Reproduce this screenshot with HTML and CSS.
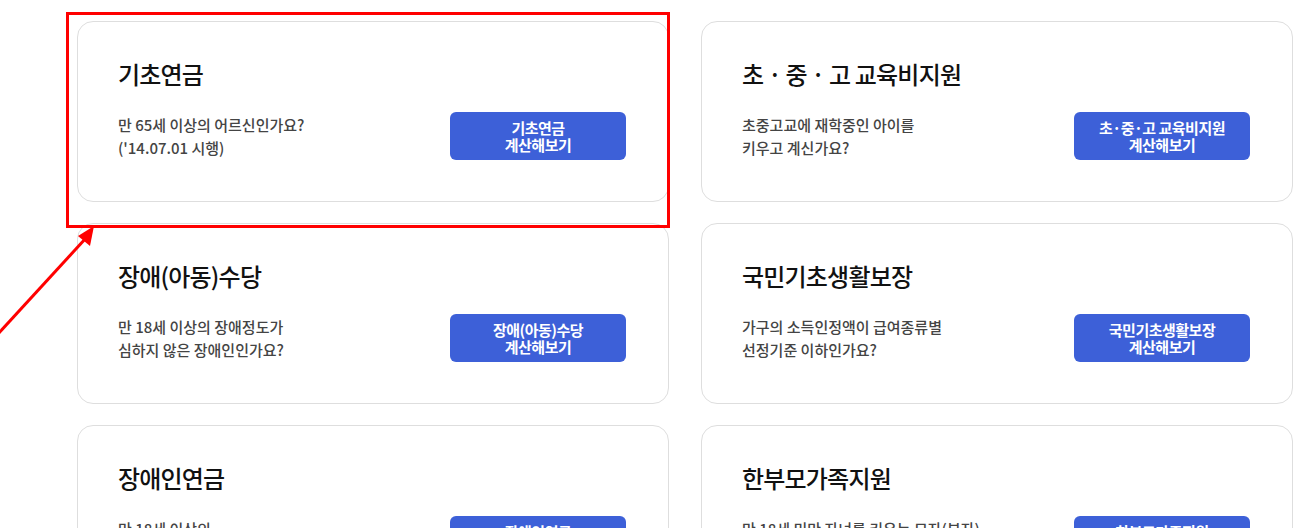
FILE: index.html
```html
<html>
    <head>
        <title>계산해보기</title>
        <link rel="stylesheet" href="styles.css">
    </head>
    <body>
        <div class="grid">
            <div class="card">
                <h3 class="title">기초연금</h3>
                <div class="row">
                    <p class="desc">만 65세 이상의 어르신인가요?<br>('14.07.01 시행)</p>
                    <a class="btn">기초연금<br>계산해보기</a>
                </div>
            </div>
            <div class="card">
                <h3 class="title">초 · 중 · 고 교육비지원</h3>
                <div class="row">
                    <p class="desc">초중고교에 재학중인 아이를<br>키우고 계신가요?</p>
                    <a class="btn">초·중·고 교육비지원<br>계산해보기</a>
                </div>
            </div>
            <div class="card">
                <h3 class="title">장애(아동)수당</h3>
                <div class="row">
                    <p class="desc">만 18세 이상의 장애정도가<br>심하지 않은 장애인인가요?</p>
                    <a class="btn">장애(아동)수당<br>계산해보기</a>
                </div>
            </div>
            <div class="card">
                <h3 class="title">국민기초생활보장</h3>
                <div class="row">
                    <p class="desc">가구의 소득인정액이 급여종류별<br>선정기준 이하인가요?</p>
                    <a class="btn">국민기초생활보장<br>계산해보기</a>
                </div>
            </div>
            <div class="card">
                <h3 class="title">장애인연금</h3>
                <div class="row">
                    <p class="desc">만 18세 이상의<br>중증장애인인가요?</p>
                    <a class="btn">장애인연금<br>계산해보기</a>
                </div>
            </div>
            <div class="card">
                <h3 class="title">한부모가족지원</h3>
                <div class="row">
                    <p class="desc">만 18세 미만 자녀를 키우는 모자(부자)<br>가족인가요?</p>
                    <a class="btn">한부모가족지원<br>계산해보기</a>
                </div>
            </div>
        </div>

        <!-- annotation -->
        <div class="mark"></div>
        <svg class="arrow" width="120" height="120" viewBox="0 0 120 120">
            <line x1="-2" y1="112" x2="86" y2="16" stroke="#ff0000" stroke-width="3"/>
            <polygon points="94,4 78,14 90,24" fill="#ff0000"/>
        </svg>
    </body>
</html>
```

FILE: styles.css
```css
body{
    margin: 0;
    background: #fff;
    font-family: "Noto Sans CJK KR", "Noto Sans", sans-serif;
    overflow: hidden;
}
.grid{
    display: grid;
    grid-template-columns: 592px 592px;
    column-gap: 32px;
    row-gap: 21px;
    padding: 21px 0 0 77px;
}
.card{
    border: 1px solid #dedede;
    border-radius: 16px;
    padding: 35px 42px 41px 40px;
    background: #fff;
}
.title{
    margin: 0;
    font-size: 24px;
    line-height: 34px;
    font-weight: 500;
    color: #111;
    letter-spacing: -0.8px;
}
.row{
    display: flex;
    justify-content: space-between;
    align-items: center;
    margin-top: 21px;
}
.desc{
    margin: 0;
    font-size: 15px;
    line-height: 23px;
    font-weight: 500;
    color: #444;
    letter-spacing: 0;
}
.btn{
    width: 176px;
    height: 48px;
    display: flex;
    align-items: center;
    justify-content: center;
    text-align: center;
    background: #3d60d8;
    border-radius: 6px;
    color: #fff;
    font-size: 15px;
    font-weight: 700;
    line-height: 17px;
    letter-spacing: -0.5px;
}
.mark{
    position: absolute;
    left: 66px;
    top: 12px;
    width: 598px;
    height: 210px;
    border: 3px solid #ff0000;
}
.arrow{
    position: absolute;
    left: 0;
    top: 222px;
}
```
